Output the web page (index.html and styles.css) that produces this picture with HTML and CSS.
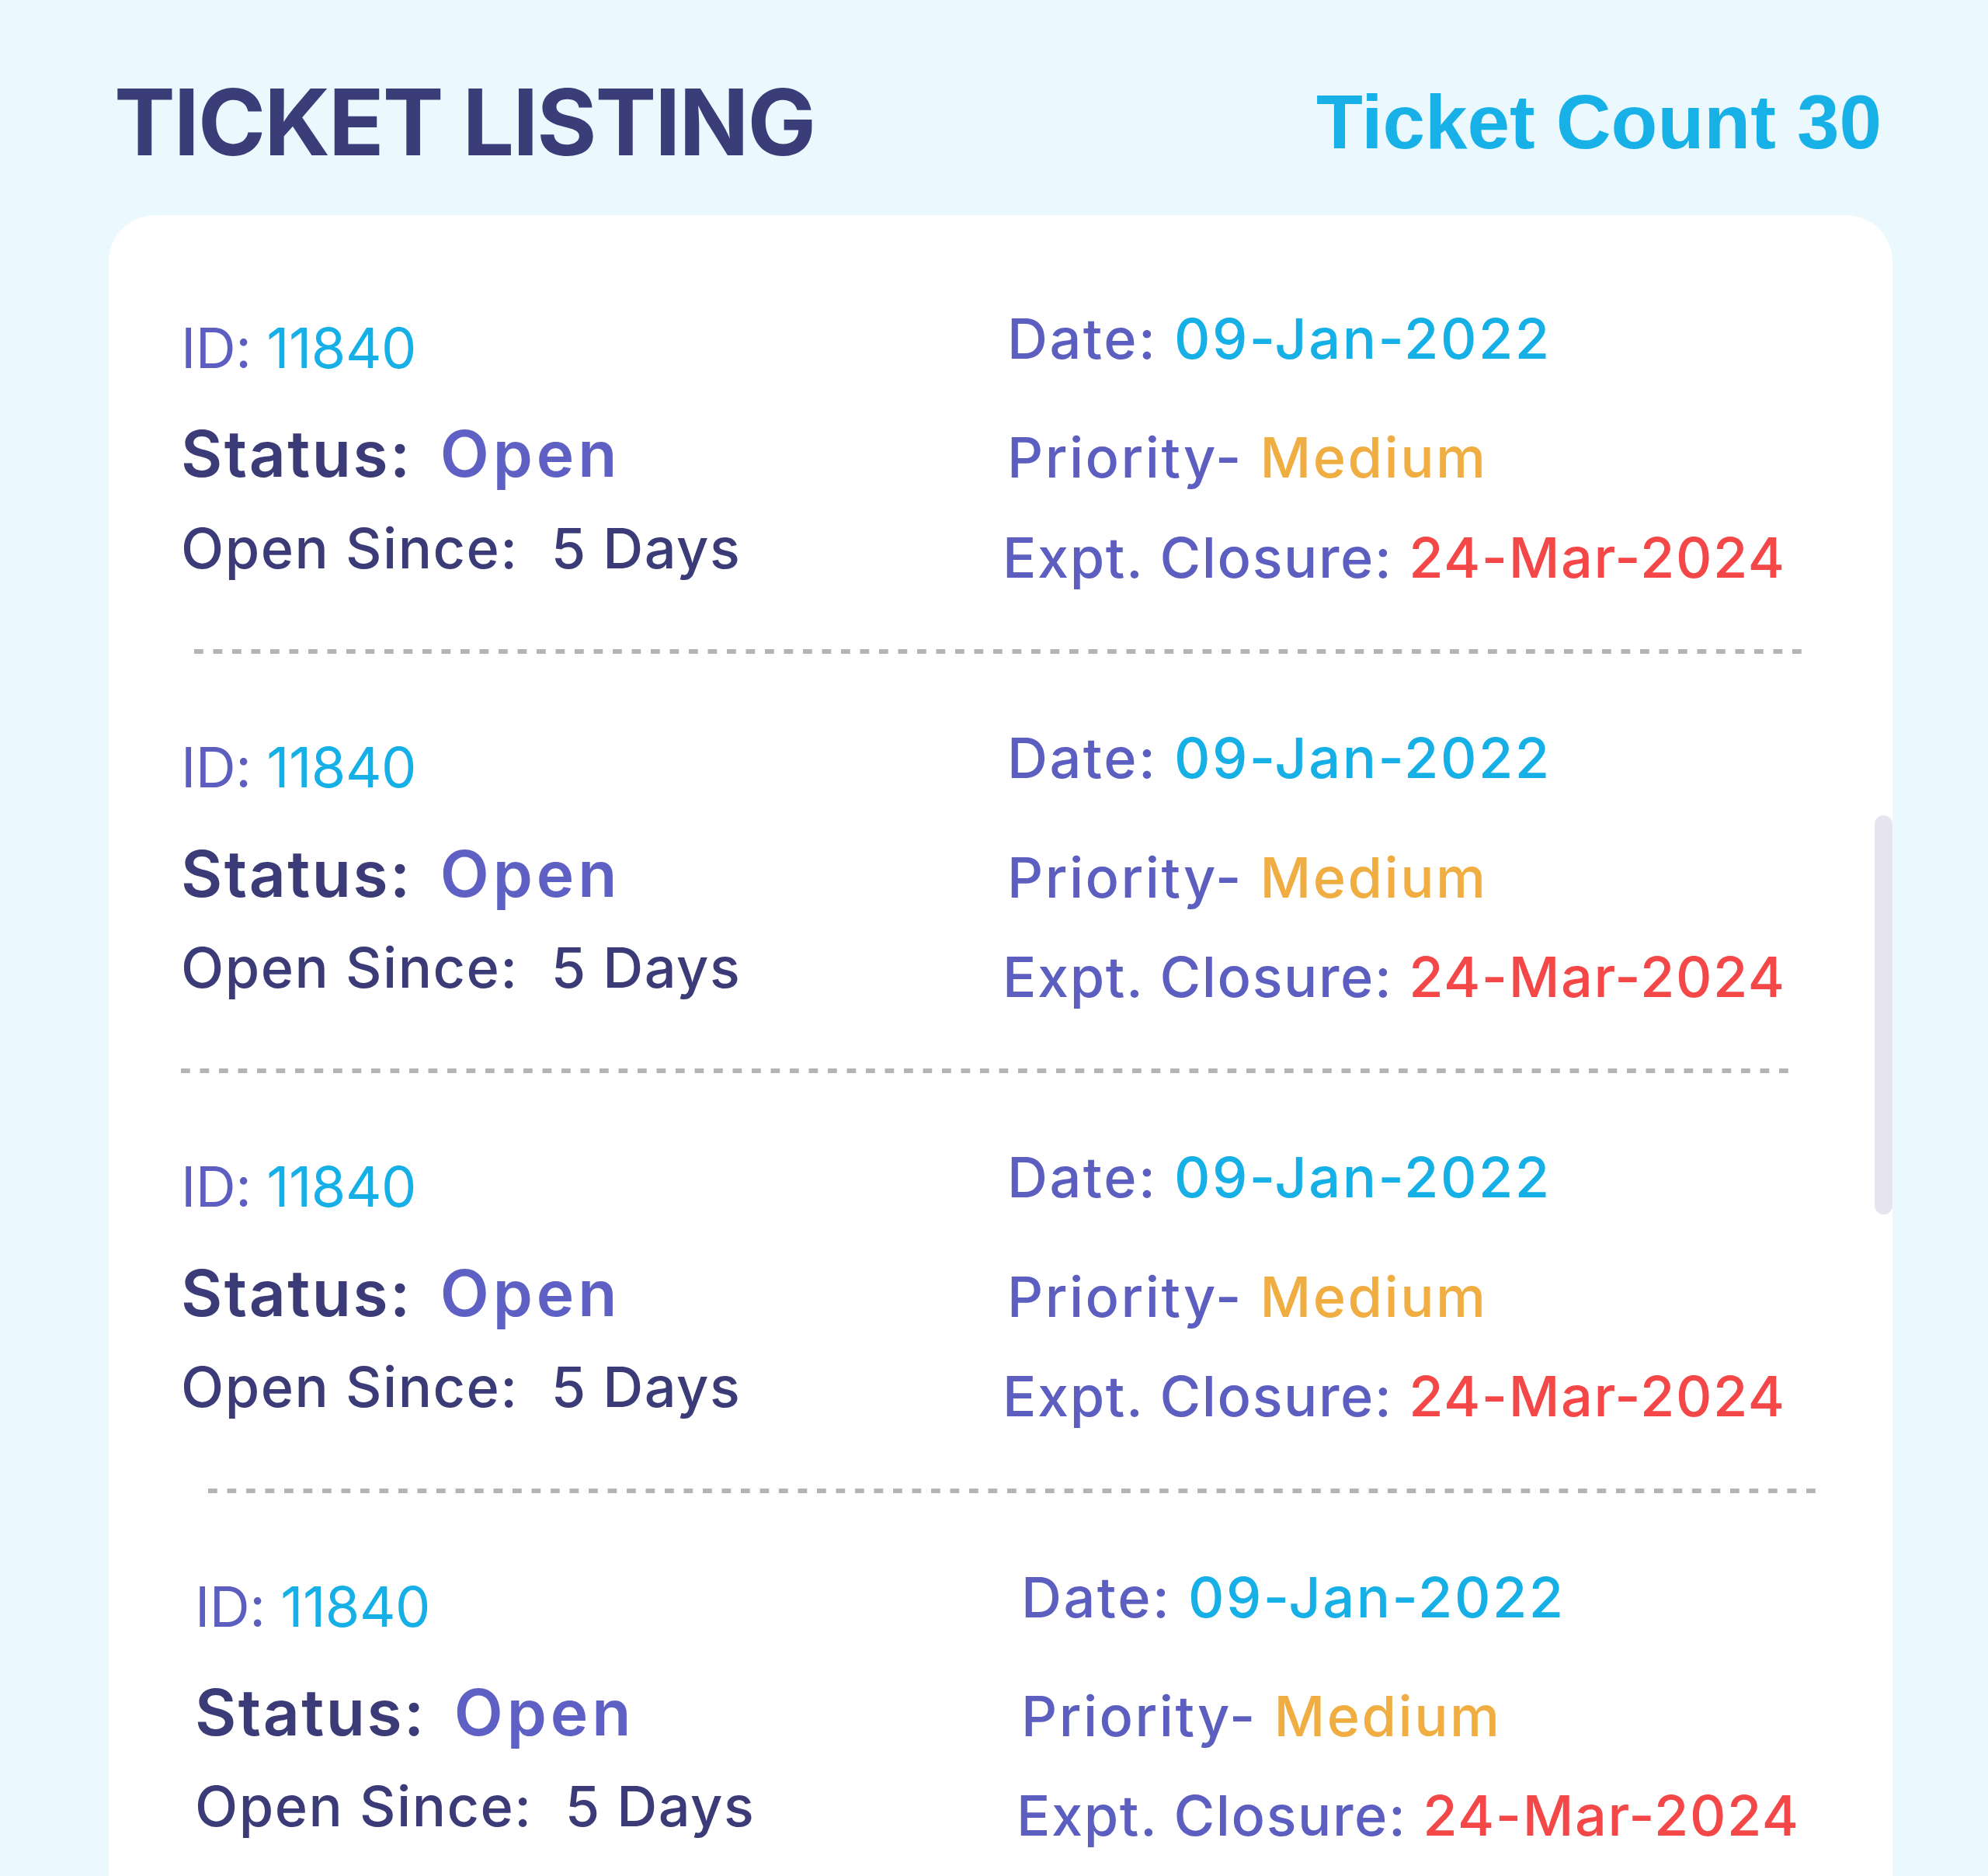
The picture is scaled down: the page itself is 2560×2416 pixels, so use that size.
FILE: index.html
```html
<!DOCTYPE html>
<html lang="en">
<head>
<meta charset="utf-8">
<title>Ticket Listing</title>
<link rel="stylesheet" href="styles.css">
</head>
<body>
<header class="page-header">
  <h1 class="page-title">TICKET LISTING</h1>
  <div class="ticket-count">Ticket Count 30</div>
</header>
<main class="card">
  <section class="ticket">
    <div class="ticket-grid">
      <div class="col col-left">
        <div class="row row-id"><span class="label">ID:</span> <span class="v-cyan">11840</span></div>
        <div class="row row-status"><span class="dark">Status:</span><span class="v-open">Open</span></div>
        <div class="row row-since"><span class="dark">Open Since:</span><span class="v-days">5 Days</span></div>
      </div>
      <div class="col col-right">
        <div class="row row-date"><span class="label">Date:</span> <span class="v-cyan">09-Jan-2022</span></div>
        <div class="row row-priority"><span class="label">Priority-</span> <span class="v-orange">Medium</span></div>
        <div class="row row-closure"><span class="label">Expt. Closure:</span> <span class="v-red">24-Mar-2024</span></div>
      </div>
    </div>
    <div class="sep sep-a"></div>
  </section>
  <section class="ticket">
    <div class="ticket-grid">
      <div class="col col-left">
        <div class="row row-id"><span class="label">ID:</span> <span class="v-cyan">11840</span></div>
        <div class="row row-status"><span class="dark">Status:</span><span class="v-open">Open</span></div>
        <div class="row row-since"><span class="dark">Open Since:</span><span class="v-days">5 Days</span></div>
      </div>
      <div class="col col-right">
        <div class="row row-date"><span class="label">Date:</span> <span class="v-cyan">09-Jan-2022</span></div>
        <div class="row row-priority"><span class="label">Priority-</span> <span class="v-orange">Medium</span></div>
        <div class="row row-closure"><span class="label">Expt. Closure:</span> <span class="v-red">24-Mar-2024</span></div>
      </div>
    </div>
    <div class="sep sep-b"></div>
  </section>
  <section class="ticket">
    <div class="ticket-grid">
      <div class="col col-left">
        <div class="row row-id"><span class="label">ID:</span> <span class="v-cyan">11840</span></div>
        <div class="row row-status"><span class="dark">Status:</span><span class="v-open">Open</span></div>
        <div class="row row-since"><span class="dark">Open Since:</span><span class="v-days">5 Days</span></div>
      </div>
      <div class="col col-right">
        <div class="row row-date"><span class="label">Date:</span> <span class="v-cyan">09-Jan-2022</span></div>
        <div class="row row-priority"><span class="label">Priority-</span> <span class="v-orange">Medium</span></div>
        <div class="row row-closure"><span class="label">Expt. Closure:</span> <span class="v-red">24-Mar-2024</span></div>
      </div>
    </div>
    <div class="sep sep-c"></div>
  </section>
  <section class="ticket ticket-shift">
    <div class="ticket-grid">
      <div class="col col-left">
        <div class="row row-id"><span class="label">ID:</span> <span class="v-cyan">11840</span></div>
        <div class="row row-status"><span class="dark">Status:</span><span class="v-open">Open</span></div>
        <div class="row row-since"><span class="dark">Open Since:</span><span class="v-days">5 Days</span></div>
      </div>
      <div class="col col-right">
        <div class="row row-date"><span class="label">Date:</span> <span class="v-cyan">09-Jan-2022</span></div>
        <div class="row row-priority"><span class="label">Priority-</span> <span class="v-orange">Medium</span></div>
        <div class="row row-closure"><span class="label">Expt. Closure:</span> <span class="v-red">24-Mar-2024</span></div>
      </div>
    </div>
  </section>
  <div class="scrollbar"></div>
</main>
</body>
</html>
```

FILE: styles.css
```css
* { box-sizing: border-box; }

html, body {
  margin: 0;
  padding: 0;
}

body {
  background: #ebf8fe;
  font-family: "Inter", "Noto Sans", sans-serif;
  width: 2560px;
  height: 2416px;
  overflow: hidden;
}

.page-header {
  height: 277px;
  padding: 36px 137px 0 147px;
  display: flex;
  align-items: center;
  justify-content: space-between;
}

.page-title {
  margin: 0;
  font-family: "Inter", sans-serif;
  font-weight: 700;
  font-size: 118px;
  line-height: 1;
  letter-spacing: -2px;
  color: #3b3d78;
}

.ticket-count {
  font-family: "Liberation Sans", Arial, sans-serif;
  font-weight: 700;
  font-size: 98px;
  line-height: 1;
  color: #17b1e8;
}

.card {
  position: relative;
  margin: 0 123px 0 140px;
  height: 2139px;
  background: #ffffff;
  border-radius: 60px 60px 0 0;
  padding-top: 25px;
  overflow: hidden;
}

.ticket {
  padding: 91px 0 0 93px;
}

.ticket-shift {
  padding-left: 111px;
}

.ticket-grid {
  display: grid;
  grid-template-columns: 1064px 1fr;
  align-items: start;
}

.col {
  display: flex;
  flex-direction: column;
}

.col-left { padding-top: 12px; }

.row {
  line-height: 1.2;
  white-space: nowrap;
}

.row-id { font-size: 72px; letter-spacing: -0.5px; }
.row-status { font-size: 82px; font-weight: 600; margin-top: 45px; letter-spacing: 2.5px; }
.row-since { font-size: 72px; font-weight: 500; margin-top: 28px; letter-spacing: 1.5px; }

.col-right .row { font-size: 72px; font-weight: 500; letter-spacing: 2.5px; }
.row-priority { margin-top: 67px; }
.row-closure { margin-top: 42px; margin-left: -6px; letter-spacing: 1.6px !important; }

.label { color: #5c5ec0; }
.dark { color: #3b3b78; }
.v-cyan { color: #17b0e6; }
.v-open { color: #5f60c4; margin-left: 36px; letter-spacing: 5px; }
.v-days { color: #3b3b78; margin-left: 42px; }
.v-orange { color: #f0ae42; }
.v-red { color: #f44747; }

.sep {
  height: 6px;
  margin-top: 75px;
  background-image: linear-gradient(to right, #b4b4b4 0 12px, transparent 12px);
  background-size: 24.5px 6px;
  background-repeat: repeat-x;
}

.sep-a { margin-left: 17px; margin-right: 115px; }
.sep-b { margin-left: 0; margin-right: 134px; }
.sep-c { margin-left: 35px; margin-right: 97px; }

.scrollbar {
  position: absolute;
  top: 773px;
  right: 0;
  width: 23px;
  height: 514px;
  border-radius: 12px;
  background: #e6e5ef;
}
```
